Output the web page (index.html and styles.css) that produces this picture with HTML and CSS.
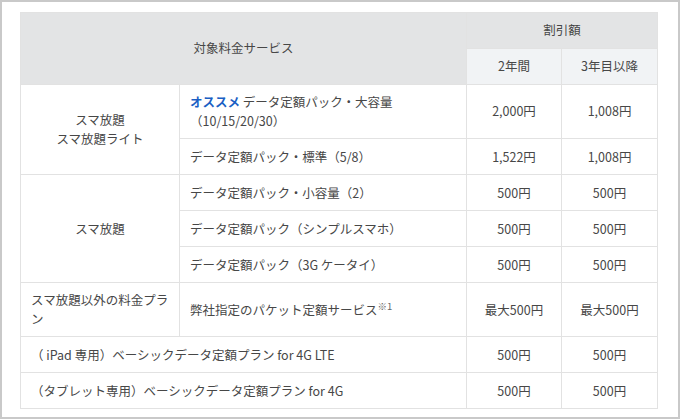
FILE: index.html
```html
<!DOCTYPE html>
<html lang="ja">
<head>
<meta charset="utf-8">
<link rel="stylesheet" href="styles.css">
</head>
<body>
<div class="frame">
  <table class="price">
    <colgroup>
      <col class="c1"><col class="c2"><col class="c3"><col class="c4">
    </colgroup>
    <thead>
      <tr>
        <th class="head" colspan="2" rowspan="2">対象料金サービス</th>
        <th class="head" colspan="2">割引額</th>
      </tr>
      <tr>
        <th class="sub">2年間</th>
        <th class="sub">3年目以降</th>
      </tr>
    </thead>
    <tbody>
      <tr>
        <td class="center" rowspan="2">スマ放題<br>スマ放題ライト</td>
        <td><span class="blue">オススメ</span> データ定額パック・大容量<br>（10/15/20/30）</td>
        <td class="center">2,000円</td>
        <td class="center">1,008円</td>
      </tr>
      <tr>
        <td>データ定額パック・標準（5/8）</td>
        <td class="center">1,522円</td>
        <td class="center">1,008円</td>
      </tr>
      <tr>
        <td class="center" rowspan="3">スマ放題</td>
        <td>データ定額パック・小容量（2）</td>
        <td class="center">500円</td>
        <td class="center">500円</td>
      </tr>
      <tr>
        <td>データ定額パック（シンプルスマホ）</td>
        <td class="center">500円</td>
        <td class="center">500円</td>
      </tr>
      <tr>
        <td>データ定額パック（3G ケータイ）</td>
        <td class="center">500円</td>
        <td class="center">500円</td>
      </tr>
      <tr>
        <td>スマ放題以外の料金プラン</td>
        <td>弊社指定のパケット定額サービス<sup class="note">※1</sup></td>
        <td class="center">最大500円</td>
        <td class="center">最大500円</td>
      </tr>
      <tr>
        <td colspan="2">（ iPad 専用）ベーシックデータ定額プラン for 4G LTE</td>
        <td class="center">500円</td>
        <td class="center">500円</td>
      </tr>
      <tr>
        <td colspan="2">（タブレット専用）ベーシックデータ定額プラン for 4G</td>
        <td class="center">500円</td>
        <td class="center">500円</td>
      </tr>
    </tbody>
  </table>
</div>
</body>
</html>
```
FILE: styles.css
```css
html, body {
  margin: 0;
  padding: 0;
  background: #ffffff;
}
.frame {
  box-sizing: border-box;
  width: 680px;
  height: 419px;
  border: 2px solid #c9c9c9;
  padding: 10px 0 0 18px;
  background: #ffffff;
}
.price {
  border-collapse: collapse;
  table-layout: fixed;
  width: 637px;
  font-family: "Noto Sans CJK JP", "Noto Sans", sans-serif;
  font-size: 12.5px;
  line-height: 18.2px;
  color: #474747;
  text-spacing-trim: space-all;
}
.c1 { width: 159px; }
.c2 { width: 287px; }
.c3 { width: 95px; }
.c4 { width: 96px; }
.price th,
.price td {
  border: 1px solid #e2e2e2;
  padding: 8.4px 10px;
  vertical-align: middle;
  font-weight: normal;
  text-align: left;
}
.price th {
  text-align: center;
}
.head {
  background: #e3e4e5;
}
.sub {
  background: #f1f3f5;
}
.center {
  text-align: center !important;
}
.blue {
  color: #1a5fc4;
  font-weight: bold;
}
.note {
  font-size: 9.5px;
  line-height: 0;
  vertical-align: 5px;
  color: #666;
}
```
